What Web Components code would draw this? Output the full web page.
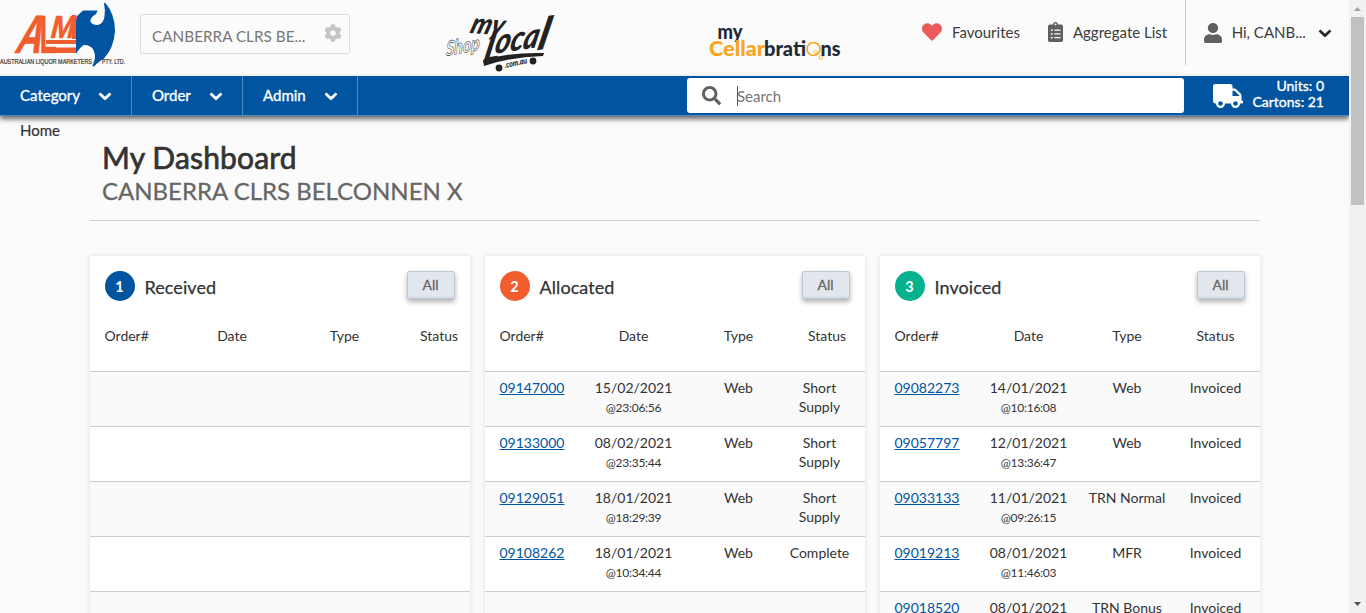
<!DOCTYPE html>
<html lang="en"><head><meta charset="utf-8"><title>My Dashboard</title>
<style>
html,body{margin:0;height:613px;overflow:hidden;background:#fbfbfb;font-family:Lato,sans-serif;color:#333}
</style></head><body><alm-app></alm-app>
<script>
const define=(name,html)=>customElements.define(name,class extends HTMLElement{
  connectedCallback(){
    if(this.shadowRoot)return;
    const root=this.attachShadow({mode:'open'});
    const t=document.createElement('template');
    t.innerHTML=typeof html==='function'?html(this):html;
    root.append(t.content.cloneNode(true));
  }
});
const ICONS={
 down:['0 0 448 512','M207.029 381.476L12.686 187.132c-9.373-9.373-9.373-24.569 0-33.941l22.667-22.667c9.357-9.357 24.522-9.375 33.901-.04L224 284.505l154.745-154.021c9.379-9.335 24.544-9.317 33.901.04l22.667 22.667c9.373 9.373 9.373 24.569 0 33.941L240.971 381.476c-9.373 9.372-24.569 9.372-33.942 0z'],
 search:['0 0 512 512','M505 442.7L405.3 343c-4.5-4.5-10.6-7-17-7H372c27.6-35.3 44-79.7 44-128C416 93.1 322.9 0 208 0S0 93.1 0 208s93.1 208 208 208c48.3 0 92.7-16.4 128-44v16.3c0 6.4 2.5 12.5 7 17l99.7 99.7c9.4 9.4 24.6 9.4 33.9 0l28.3-28.3c9.4-9.4 9.4-24.6.1-34zM208 336c-70.7 0-128-57.2-128-128 0-70.7 57.2-128 128-128 70.7 0 128 57.2 128 128 0 70.7-57.2 128-128 128z'],
 heart:['0 0 512 512','M462.3 62.6C407.5 15.9 326 24.3 275.7 76.2L256 96.5l-19.7-20.3C186.1 24.3 104.5 15.9 49.7 62.6c-62.8 53.6-66.1 149.8-9.9 207.9l193.5 199.8c12.5 12.9 32.8 12.9 45.3 0l193.5-199.8c56.3-58.1 53-154.3-9.8-207.9z'],
 user:['0 0 448 512','M224 256c70.7 0 128-57.3 128-128S294.7 0 224 0 96 57.3 96 128s57.3 128 128 128zm89.6 32h-16.7c-22.2 10.2-46.9 16-72.9 16s-50.6-5.8-72.9-16h-16.7C60.2 288 0 348.2 0 422.4V464c0 26.5 21.5 48 48 48h352c26.5 0 48-21.5 48-48v-41.6c0-74.2-60.2-134.4-134.4-134.4z'],
 cog:['0 0 512 512','M487.4 315.7l-42.6-24.6c4.3-23.2 4.3-47 0-70.2l42.6-24.6c4.9-2.8 7.1-8.6 5.5-14-11.1-35.6-30-67.8-54.7-94.6-3.8-4.1-10-5.1-14.8-2.3L380.8 110c-17.9-15.4-38.5-27.3-60.8-35.1V25.8c0-5.6-3.9-10.5-9.4-11.7-36.7-8.2-74.3-7.8-109.2 0-5.5 1.2-9.4 6.1-9.4 11.7V75c-22.2 7.9-42.8 19.8-60.8 35.1L88.7 85.5c-4.9-2.8-11-1.9-14.8 2.3-24.7 26.7-43.6 58.9-54.7 94.6-1.7 5.4.6 11.2 5.5 14L67.3 221c-4.3 23.2-4.3 47 0 70.2l-42.6 24.6c-4.9 2.8-7.1 8.6-5.5 14 11.1 35.6 30 67.8 54.7 94.6 3.8 4.1 10 5.1 14.8 2.3l42.6-24.6c17.9 15.4 38.5 27.3 60.8 35.1v49.2c0 5.6 3.9 10.5 9.4 11.7 36.7 8.2 74.3 7.8 109.2 0 5.5-1.2 9.4-6.1 9.4-11.7v-49.2c22.2-7.9 42.8-19.8 60.8-35.1l42.6 24.6c4.9 2.8 11 1.9 14.8-2.3 24.7-26.7 43.6-58.9 54.7-94.6 1.5-5.5-.7-11.3-5.6-14.1zM256 336c-44.1 0-80-35.9-80-80s35.9-80 80-80 80 35.9 80 80-35.9 80-80 80z'],
 list:['0 0 384 512','M336 64h-80c0-35.3-28.7-64-64-64s-64 28.7-64 64H48C21.5 64 0 85.5 0 112v352c0 26.5 21.5 48 48 48h288c26.5 0 48-21.5 48-48V112c0-26.5-21.5-48-48-48zM96 424c-13.3 0-24-10.7-24-24s10.7-24 24-24 24 10.7 24 24-10.7 24-24 24zm0-96c-13.3 0-24-10.7-24-24s10.7-24 24-24 24 10.7 24 24-10.7 24-24 24zm0-96c-13.3 0-24-10.7-24-24s10.7-24 24-24 24 10.7 24 24-10.7 24-24 24zm96-192c13.3 0 24 10.7 24 24s-10.7 24-24 24-24-10.7-24-24 10.7-24 24-24zm128 368c0 4.4-3.6 8-8 8H168c-4.4 0-8-3.6-8-8v-16c0-4.4 3.6-8 8-8h144c4.4 0 8 3.6 8 8v16zm0-96c0 4.4-3.6 8-8 8H168c-4.4 0-8-3.6-8-8v-16c0-4.4 3.6-8 8-8h144c4.4 0 8 3.6 8 8v16zm0-96c0 4.4-3.6 8-8 8H168c-4.4 0-8-3.6-8-8v-16c0-4.4 3.6-8 8-8h144c4.4 0 8 3.6 8 8v16z'],
 truck:['0 0 640 512','M624 352h-16V243.9c0-12.7-5.1-24.9-14.1-33.9L494 110.1c-9-9-21.2-14.1-33.9-14.1H416V48c0-26.5-21.5-48-48-48H48C21.5 0 0 21.5 0 48v320c0 26.5 21.5 48 48 48h16c0 53 43 96 96 96s96-43 96-96h128c0 53 43 96 96 96s96-43 96-96h48c8.8 0 16-7.2 16-16v-32c0-8.8-7.2-16-16-16zM160 464c-26.500 0-48-21.500-48-48s21.500-48 48-48 48 21.500 48 48-21.500 48-48 48zm320 0c-26.500 0-48-21.500-48-48s21.500-48 48-48 48 21.500 48 48-21.500 48-48 48zm80-208H416V144h44.100l99.900 99.900V256z']
};
define('fa-icon',el=>{const[v,d]=ICONS[el.getAttribute('name')];return `<style>:host{display:block;flex:none}svg{display:block;width:100%;height:100%;fill:currentColor;stroke:currentColor;stroke-width:var(--bold,0);overflow:visible}</style><svg viewBox="${v}" preserveAspectRatio="none"><path d="${d}"/></svg>`});

define('alm-logo',`<style>:host{display:block;width:126px;height:76px;flex:none}svg{display:block}</style>
<svg width="126" height="76" viewBox="0 0 126 76">
<path fill="#0054a0" d="M105 2.500Q115 14 115 31Q114 48 103.500 59Q99 61 94 66.500L92.500 66L94.500 60Q96 55 93 49Q89 44.500 84 45Q80 47 76 54V17L83 10.500H97.500L96 14Q90 17 90.500 22Q93 25.500 98 25Q104 23 104.500 16Q105.500 10 104 3.500Z"/>
<g fill="#f15d2f" stroke="#f15d2f" font-family="Liberation Sans" font-weight="700">
<text transform="translate(13.500 53) skewX(-19)" font-size="54" stroke-width=".6" textLength="26" lengthAdjust="spacingAndGlyphs">A</text>
<text x="39.500" y="53" font-size="54" stroke-width=".3" textLength="17" lengthAdjust="spacingAndGlyphs">L</text>
<text transform="translate(49 38) skewX(-14)" font-size="32" stroke-width=".6" textLength="24" lengthAdjust="spacingAndGlyphs">M</text>
<path stroke="none" d="M72 15h4v24h-4zM46 40h30v4H46zM50 47.500h26V53H50z"/></g>
<text x="0" y="64" font-family="Liberation Sans" font-size="6.400" textLength="92" lengthAdjust="spacingAndGlyphs" fill="#333" stroke="#333" stroke-width=".2">AUSTRALIAN LIQUOR MARKETERS</text>
<text x="102" y="64" font-family="Liberation Sans" font-size="6.400" textLength="23" lengthAdjust="spacingAndGlyphs" fill="#333" stroke="#333" stroke-width=".2">PTY. LTD.</text>
</svg>`);

define('local-logo',`<style>:host{display:block;width:116px;height:62px}svg{display:block;overflow:visible}text{font-family:Lato,sans-serif;font-style:italic}</style>
<svg width="116" height="62" viewBox="444 13 116 62"><g fill="#222">
<text transform="translate(446 56) rotate(-10) skewX(-12)" font-size="20" font-weight="700" textLength="34" lengthAdjust="spacingAndGlyphs" fill="none" stroke="#444" stroke-width=".6">Shop</text>
<text transform="translate(469 33) rotate(4) skewX(-14)" font-size="29" font-weight="900" textLength="33" lengthAdjust="spacingAndGlyphs">my</text>
<text transform="translate(482 63) rotate(-9) skewX(-22)" font-size="41" font-weight="900"><tspan textLength="16" lengthAdjust="spacingAndGlyphs">L</tspan><tspan x="10" y="-7" font-size="34" textLength="44" lengthAdjust="spacingAndGlyphs">oca</tspan><tspan x="54" y="-4" font-size="43">l</tspan></text>
<path d="M483 60Q510 52 544 53L543 56Q510 57 484 66Z"/>
<circle cx="499" cy="68" r="3.400"/><circle cx="533" cy="61" r="3.400"/>
<text transform="translate(505 68) rotate(-12)" font-size="8.500" font-weight="900" textLength="23" lengthAdjust="spacingAndGlyphs">.com.au</text></g></svg>`);

define('cellar-logo',`<style>:host{display:block;width:134px;height:40px}svg{display:block}text{font-family:Lato,sans-serif;font-weight:900}</style>
<svg width="134" height="40" viewBox="708 24 134 40">
<text x="717.500" y="39" font-size="21" textLength="25" lengthAdjust="spacingAndGlyphs" fill="#1f2a37">my</text>
<text x="709" y="55.500" font-size="20" textLength="56" lengthAdjust="spacingAndGlyphs" fill="#f9a61f">Cellar</text>
<text x="764" y="55.500" font-size="20" textLength="42" lengthAdjust="spacingAndGlyphs" fill="#1f2a37">brati</text>
<g fill="none" stroke="#f9a61f"><circle cx="813.500" cy="49" r="6.500" stroke-width="1.700"/><circle cx="815.500" cy="52" r="1.500" stroke-width=".7"/><circle cx="821" cy="57.500" r="1.900" stroke-width=".8"/></g>
<text x="820.500" y="55.500" font-size="20" textLength="20" lengthAdjust="spacingAndGlyphs" fill="#1f2a37">ns</text></svg>`);

define('top-bar',`<style>
:host{display:flex;height:76px;align-items:flex-start}
.store{box-sizing:border-box;width:210px;height:40px;margin:14px 0 0 14px;border:1px solid #ddd;border-radius:2px;padding:3px 7px 0 11px;display:flex;align-items:center;justify-content:space-between;font-size:15.300px;color:#777}
.store fa-icon{width:18px;height:18px;color:#c4c4c4;margin-top:-6px}
local-logo{margin:13px 0 0 94px}cellar-logo{margin:24px 0 0 148px}
.link{display:flex;align-items:center;height:64px;font-size:15px;white-space:nowrap;color:#3c3c3c}
.link fa-icon{color:#606060}
.fav{margin-left:80px;gap:10px}.fav .h{width:20px;height:20px;color:#ec5a59;margin-top:-1px}
.agg{margin-left:28px;gap:10px}.agg .l{width:15px;height:20px;margin-top:-1px}
.me{margin-left:18px;border-left:1px solid #ccc;height:65px;padding-left:18px}.me span{margin-top:-1px}.me .u{width:18px;height:20px;margin-right:9.500px}.me .d{width:12px;height:13px;color:#222;margin-left:13px;margin-top:1px;--bold:30}
</style><alm-logo></alm-logo><div class="store"><span>CANBERRA CLRS BE...</span><fa-icon name="cog"></fa-icon></div>
<local-logo></local-logo><cellar-logo></cellar-logo>
<div class="link fav"><fa-icon class="h" name="heart"></fa-icon><span>Favourites</span></div>
<div class="link agg"><fa-icon class="l" name="list"></fa-icon><span>Aggregate List</span></div>
<div class="link me"><fa-icon class="u" name="user"></fa-icon><span>Hi, CANB...</span><fa-icon class="d" name="down"></fa-icon></div>`);

define('nav-item',`<style>:host{display:flex;box-sizing:border-box;height:39px;align-items:center;justify-content:space-between;padding:0 20px 1px 20px;border-right:1px solid #4c88bd;color:#fff;font-size:15px;-webkit-text-stroke:.35px currentColor}fa-icon{width:12px;height:13px;margin-top:2px;--bold:36}</style><slot></slot><fa-icon name="down"></fa-icon>`);
define('nav-bar',`<style>
:host{display:flex;box-sizing:border-box;height:40px;background:#0054a0;border-bottom:1px solid #4c88bd;box-shadow:0 3px 5px rgba(0,0,0,.6)}
nav-item:nth-of-type(1){width:132px}nav-item:nth-of-type(2){width:111px}nav-item:nth-of-type(3){width:115px}
.search{box-sizing:border-box;width:497px;height:35px;background:#fff;border-radius:3px;margin:2px 0 0 329px;padding-left:15px;display:flex;align-items:center;font-size:15px;color:#757575}
.search fa-icon{width:19px;height:19px;color:#606060}.caret{width:1px;height:20px;background:#555;margin:0 -1px 0 16px}
.cart{margin-left:auto;width:165px;display:flex;color:#fff;font-size:14px;-webkit-text-stroke:.35px currentColor}
.cart fa-icon{width:30px;height:24px;margin:8px 0 0 29px}.tot{width:81px;text-align:right;line-height:16px;padding-top:2px}
</style><nav-item>Category</nav-item><nav-item>Order</nav-item><nav-item>Admin</nav-item>
<div class="search"><fa-icon name="search"></fa-icon><span class="caret"></span><span>Search</span></div>
<div class="cart"><fa-icon name="truck"></fa-icon><div class="tot">Units: 0<br>Cartons: 21</div></div>`);

define('order-row',el=>{const[o,d,t,ty,s]=(el.getAttribute('data')||'||||').split('|');return `<style>
:host{display:grid;grid-template-columns:var(--cols);box-sizing:border-box;height:55px;border-top:1px solid #ccc;padding:6px 0 0;font-size:14px;line-height:19px;text-align:center}
a{color:#0054a0;text-decoration:underline;text-align:left;padding-left:14.500px}small{display:block;font-size:12px;letter-spacing:-.25px;line-height:21px}
</style><a>${o}</a><span>${d}<small>${t}</small></span><span>${ty}</span><span>${s}</span>`});

define('order-card',el=>`<style>
:host{display:block;box-sizing:border-box;width:380px;height:420px;background:#fff;box-shadow:0 0 5px rgba(0,0,0,.12)}
header{display:flex;height:60px;padding:15px 15px 0;box-sizing:border-box;align-items:flex-start}
i{font-style:normal;width:30px;height:30px;border-radius:50%;background:${el.getAttribute('color')};color:#fff;font-size:14.500px;font-weight:700;line-height:31px;text-align:center;text-indent:-1px}
h2{margin:0 0 0 9.500px;font-size:18px;font-weight:400;letter-spacing:.08px;-webkit-text-stroke:.25px currentColor;line-height:33px;flex:1}
button{box-sizing:border-box;width:48px;height:28px;padding:0 1px 2px 0;border:1px solid #bcc8d4;border-radius:2px;background:#e2e7ee;box-shadow:inset 0 -2px #d8dfe8,0 3px 5px rgba(0,0,0,.3);font:400 14px Lato,sans-serif;-webkit-text-stroke:.3px currentColor;color:#666}
.head{display:grid;grid-template-columns:var(--hcols,var(--cols));height:55px;padding-top:10px;box-sizing:border-box;line-height:19px;font-size:14px;text-align:center}
.head b{font-weight:400}.head b:first-child{text-align:left;padding-left:14.500px}
::slotted(order-row:nth-child(odd)){background:#fafafa}
</style><header><i>${el.getAttribute('n')}</i><h2>${el.getAttribute('title')}</h2><button>All</button></header>
<div class="head"><b>Order#</b><b>Date</b><b>Type</b><b>Status</b></div><slot></slot>`);

define('page-scroll',`<style>:host{display:flex;flex-direction:column;align-items:center;width:17px;height:613px;background:#f1f1f1;box-sizing:border-box}
svg{width:17px;height:17px;flex:none}.thumb{width:13px;height:188px;background:#c1c1c1}.sp{flex:1}</style>
<svg><path d="M5 11h7L8.500 7z" fill="#a3a3a3"/></svg><div class="thumb"></div><div class="sp"></div><svg><path d="M5 6h7L8.500 10z" fill="#505050"/></svg>`);

const row=s=>`<order-row data="${s}"></order-row>`;
define('alm-app',`<style>
:host{display:flex;height:613px;overflow:hidden}
main{width:1349px;height:613px;overflow:hidden}
.crumb{font-size:15px;line-height:20px;height:20px;-webkit-text-stroke:.2px currentColor;padding:4px 0 0 20px}
.title{margin:0 89px 0 90px;padding:0 12px;height:81px;border-bottom:1px solid #ccc;box-sizing:border-box}
h1{margin:0;font-size:30px;font-weight:400;line-height:34px;letter-spacing:.15px;-webkit-text-stroke:.7px currentColor}h3{margin:0;font-size:24px;font-weight:400;color:#666;line-height:33px;-webkit-text-stroke:.3px currentColor}
.cards{display:flex;gap:15px;margin:35px 0 0 90px}
.a{--hcols:84px 116px 109px 80px;--cols:84px 115px 110px 71px}
.b{--cols:90px 117px 93px 69px;--hcols:90px 117px 93px 84px}
.c{--cols:90px 117px 80px 97px}
</style><main><top-bar></top-bar><nav-bar></nav-bar><div class="crumb">Home</div>
<div class="title"><h1>My Dashboard</h1><h3>CANBERRA CLRS BELCONNEN X</h3></div>
<div class="cards">
<order-card class="a" n="1" title="Received" color="#0054a0">${row('||||').repeat(5)}</order-card>
<order-card class="b" n="2" title="Allocated" color="#f15d2f">${row('09147000|15/02/2021|@23:06:56|Web|Short<br>Supply')+row('09133000|08/02/2021|@23:35:44|Web|Short<br>Supply')+row('09129051|18/01/2021|@18:29:39|Web|Short<br>Supply')+row('09108262|18/01/2021|@10:34:44|Web|Complete')+row('||||')}</order-card>
<order-card class="c" n="3" title="Invoiced" color="#06b18e">${row('09082273|14/01/2021|@10:16:08|Web|Invoiced')+row('09057797|12/01/2021|@13:36:47|Web|Invoiced')+row('09033133|11/01/2021|@09:26:15|TRN Normal|Invoiced')+row('09019213|08/01/2021|@11:46:03|MFR|Invoiced')+row('09018520|08/01/2021||TRN Bonus|Invoiced')}</order-card>
</div></main><page-scroll></page-scroll>`);
</script></body></html>
